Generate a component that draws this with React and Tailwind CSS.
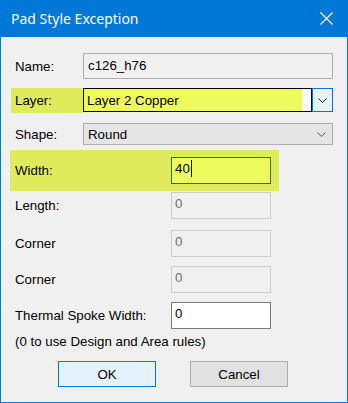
const ui = { fontFamily: '"Liberation Sans", Arial, sans-serif' };

function Chevron({ color = "#000" }) {
  return (
    <svg width="9" height="5" viewBox="0 0 9 5" fill="none">
      <path d="M0.5 0.5 L4.5 4.5 L8.5 0.5" stroke={color} strokeWidth="1" />
    </svg>
  );
}

function NumBox({ value, active }) {
  return (
    <div
      className={`w-[100px] h-[27px] border pl-[3px] pt-[3px] leading-[15px] ${
        active ? "bg-white border-[#7a7a7a] text-black" : "bg-[#f0f0f0] border-[#cccccc] text-[#6d6d6d]"
      }`}
    >
      {value}
    </div>
  );
}

export default function App() {
  return (
    <div className="w-[348px] h-[403px] bg-[#0078d7] flex flex-col" style={ui}>
      {/* Title bar */}
      <div className="h-[37px] flex items-center justify-between pl-[11px] pr-[15px] shrink-0">
        <span
          className="text-white text-[14px]"
          style={{ fontFamily: '"Noto Sans", "Open Sans", sans-serif' }}
        >
          Pad Style Exception
        </span>
        <svg width="13" height="13" viewBox="0 0 13 13">
          <path d="M0.5 0.5 L12.5 12.5 M12.5 0.5 L0.5 12.5" stroke="#fff" strokeWidth="1.2" />
        </svg>
      </div>

      {/* Body */}
      <div className="flex-1 mx-px mb-px bg-[#f0f0f0] text-[13.3px] leading-[15px] text-black">
        {/* Name */}
        <div className="mt-[16px] h-[26px] flex items-center">
          <span className="w-[82px] pl-[14px]">Name:</span>
          <div className="w-[250px] h-[26px] border border-[#adadad] bg-[#f0f0f0] pl-[4px] pt-[4px]">
            c126_h76
          </div>
        </div>

        {/* Layer */}
        <div className="mt-[9px] h-[25px] flex">
          <div className="ml-[10px] w-[72px] h-[25px] bg-[#e0eb5b] pl-[4px] flex items-center">
            Layer:
          </div>
          <div className="w-[229px] h-[24px] border border-black flex">
            <div className="flex-1 bg-[#edfb5d] pl-[3px] flex items-center">Layer 2 Copper</div>
            <div className="w-[9px] bg-white" />
          </div>
          <div className="w-[21px] h-[24px] border border-[#0078d7] bg-[#e5f1fb] flex items-center justify-center">
            <Chevron color="#222" />
          </div>
        </div>

        {/* Shape */}
        <div className="mt-[10px] h-[22px] flex items-center">
          <span className="w-[82px] pl-[14px]">Shape:</span>
          <div className="w-[250px] h-[22px] border border-[#adadad] bg-[#e5e5e5] pl-[4px] pr-[6px] flex items-center justify-between">
            <span>Round</span>
            <Chevron color="#555" />
          </div>
        </div>

        {/* Width */}
        <div className="mt-[5px] ml-[9px] w-[269px] h-[41px] bg-[#e0eb5b] flex items-center">
          <span className="w-[161px] pl-[5px]">Width:</span>
          <div className="w-[100px] h-[27px] border border-[#1d7a49] bg-[#edfb5d] pl-[3px] pt-[3px] flex items-start">
            <span>40</span>
            <span className="w-px h-[17px] bg-black ml-px -mt-px" />
          </div>
        </div>

        {/* Length */}
        <div className="mt-px h-[27px] flex items-center">
          <span className="w-[170px] pl-[14px]">Length:</span>
          <NumBox value="0" />
        </div>

        {/* Corner */}
        <div className="mt-[11px] h-[27px] flex items-center">
          <span className="w-[170px] pl-[14px]">Corner</span>
          <NumBox value="0" />
        </div>

        <div className="mt-[9px] h-[27px] flex items-center">
          <span className="w-[170px] pl-[14px]">Corner</span>
          <NumBox value="0" />
        </div>

        {/* Thermal */}
        <div className="mt-[9px] h-[27px] flex items-center">
          <span className="w-[170px] pl-[14px]">Thermal Spoke Width:</span>
          <NumBox value="0" active />
        </div>

        <div className="mt-[5px] pl-[14px]">(0 to use Design and Area rules)</div>

        {/* Buttons */}
        <div className="mt-[12px] flex gap-[34px] pl-[57px]">
          <button className="w-[98px] h-[26px] border border-[#0078d7] bg-[#e5f1fb]">OK</button>
          <button className="w-[98px] h-[26px] border border-[#adadad] bg-[#e1e1e1]">Cancel</button>
        </div>
      </div>
    </div>
  );
}
